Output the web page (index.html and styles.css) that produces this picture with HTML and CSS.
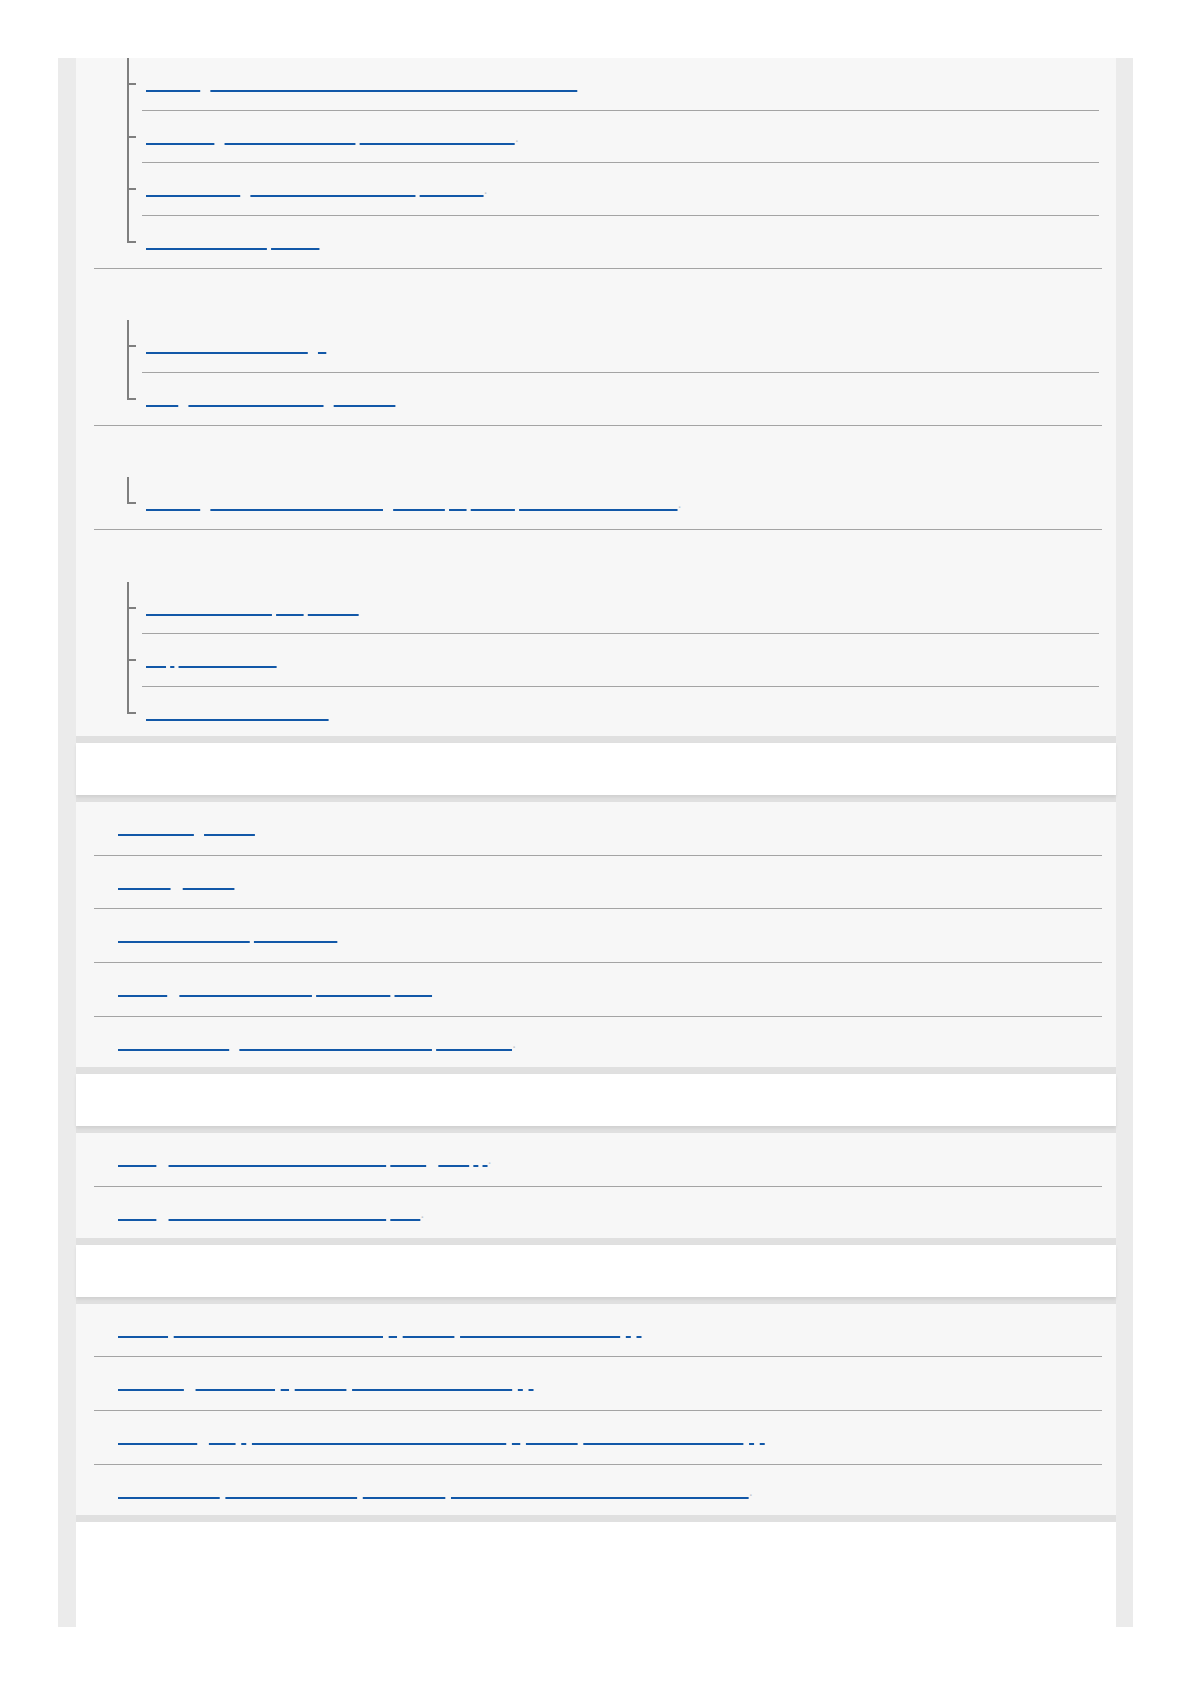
FILE: index.html
```html
<!DOCTYPE html>
<html lang="en">
<head>
    <meta charset="UTF-8">
    <meta name="viewport" content="width=device-width, initial-scale=1.0">
    <title>Help Guide - Contents</title>
    <link rel="stylesheet" href="styles.css">
</head>
<body>
<div class="page">
    <div class="sheet">

        <section class="panel">
            <ul class="topics">
                <li class="topic">
                    <ul class="tree">
                        <li><a href="#"><span>Settings</span> <span class="gap">for connecting to the smartphone via Bluetooth function</span></a></li>
                        <li><a href="#"><span>Recording</span> <span class="gap">the camera settings</span> <span>from the remote control</span><em class="stop">.</em></a></li>
                        <li><a href="#"><span>Synchronizing</span> <span class="gap">images to your computer</span> <span>wirelessly</span><em class="stop">.</em></a></li>
                        <li><a href="#"><span>Restoring network</span> <span>options</span></a></li>
                    </ul>
                </li>
                <li class="topic">
                    <h3 class="topic-title">Connecting to a smartphone</h3>
                    <ul class="tree">
                        <li><a href="#"><span>Connecting with Android</span> <span class="gap">1</span></a></li>
                        <li><a href="#"><span>View</span> <span class="gap">images on the tablet</span> <span class="gap">(Android)</span></a></li>
                    </ul>
                </li>
                <li class="topic">
                    <h3 class="topic-title">Connecting to a computer</h3>
                    <ul class="tree">
                        <li><a href="#"><span>Settings</span> <span class="gap">of the wireless connection</span> <span class="gap">settings</span> <span>for</span> <span>mobile</span> <span>devices and a computer</span><em class="stop">.</em></a></li>
                    </ul>
                </li>
                <li class="topic">
                    <h3 class="topic-title">Network settings</h3>
                    <ul class="tree">
                        <li><a href="#"><span>Connecting to your</span> <span>own</span> <span>devices</span></a></li>
                        <li><a href="#"><span>On</span> <span>/</span> <span>Off settings list</span></a></li>
                        <li class="short"><a href="#"><span>Notes on wireless functions</span></a></li>
                    </ul>
                </li>
            </ul>
        </section>

        <div class="bar"><h2 class="bar-title">Before use</h2></div>

        <section class="panel">
            <ul class="links">
                <li><a href="#"><span>Compatible</span> <span class="gap">devices</span></a></li>
                <li><a href="#"><span>Storage</span> <span class="gap-wide">settings</span></a></li>
                <li><a href="#"><span>Recordable number</span> <span>of video files</span></a></li>
                <li><a href="#"><span>Display</span> <span class="gap-wide">indications on every</span> <span>screen and</span> <span>finder</span></a></li>
                <li><a href="#"><span>Troubleshooting:</span> <span class="gap">if your camera does not work</span> <span>as it should</span><em class="stop">.</em></a></li>
            </ul>
        </section>

        <div class="bar"><h2 class="bar-title">Using the app</h2></div>

        <section class="panel">
            <ul class="links">
                <li><a href="#"><span>Using</span> <span class="gap-wide">the camera from the smartphone</span> <span>using</span> <span class="gap-wide">NFC</span> <span>(</span> <span>)</span><em class="stop">.</em></a></li>
                <li><a href="#"><span>Using</span> <span class="gap-wide">the camera from the smartphone</span> <span>iPad</span><em class="stop">.</em></a></li>
            </ul>
        </section>

        <div class="bar"><h2 class="bar-title">Information</h2></div>

        <section class="panel">
            <ul class="links spaced">
                <li><a href="#"><span>Notices</span> <span>regarding the included software</span> <span>a</span> <span>settings</span> <span>of open source software</span> <span>-</span> <span>)</span></a></li>
                <li><a href="#"><span>Operating</span> <span class="gap">Trademarks</span> <span>a</span> <span>settings</span> <span>of open source software</span> <span>-</span> <span>)</span></a></li>
                <li><a href="#"><span>Precautions</span> <span class="gap">with</span> <span>-</span> <span>the wireless connection between them</span> <span>a</span> <span>settings</span> <span>of open source software</span> <span>-</span> <span>)</span></a></li>
                <li><a href="#"><span>Recommended</span> <span>system requirement</span> <span>for Windows</span> <span>and Mac computers when using the software</span><em class="stop">.</em></a></li>
            </ul>
        </section>

        <div class="end"></div>
    </div>
</div>
</body>
</html>
```

FILE: styles.css
```css
body {
    margin: 0;
    background-color: #fff;
    font-family: "Liberation Sans", Arial, sans-serif;
    font-size: 15px;
}

.page {
    width: 1075px;
    margin: 58px 0 0 58px;
    padding: 0 17px 0 18px;
    box-sizing: border-box;
    background-color: #ebebeb;
}

.sheet {
    display: flex;
    flex-direction: column;
    gap: 7px;
    background-color: #e0e0e0;
}

.panel {
    background-color: #f7f7f7;
}

.bar {
    height: 52px;
    background-color: #fff;
    box-shadow: 0 2px 3px rgba(0, 0, 0, 0.08);
}

.bar-title {
    margin: 0;
    padding-left: 18px;
    font-size: 16px;
    font-weight: normal;
    line-height: 52px;
    color: transparent;
}

.end {
    height: 105px;
    background-color: #fff;
}

/* links: text is not drawn, only the underlines */
a {
    color: transparent;
    text-decoration: none;
    white-space: nowrap;
}

a span {
    text-decoration: underline;
    text-decoration-color: #1258a8;
    text-decoration-thickness: 1.5px;
    text-decoration-skip-ink: none;
}

a .stop {
    font-style: normal;
    color: #c4c9d0;
}

.gap {
    margin-left: 6px;
}

.gap-wide {
    margin-left: 8px;
}

/* grouped topics with a tree */
.topics {
    list-style: none;
    margin: 0 14px 0 18px;
    padding: 0;
}

.topic {
    border-bottom: 1px solid #a4a4a4;
}

.topic:last-child {
    border-bottom: 0;
}

.topic-title {
    margin: 0;
    height: 51.67px;
    padding-left: 24px;
    font-size: 15px;
    font-weight: normal;
    line-height: 51.67px;
    color: transparent;
}

.tree {
    list-style: none;
    margin: 0 3px 0 33px;
    padding: 0 0 0 15px;
}

.tree li {
    position: relative;
    height: 51.67px;
    line-height: 51.67px;
    padding-left: 4px;
    border-bottom: 1px solid #a4a4a4;
}

.tree li:last-child {
    border-bottom: 0;
}

.tree li.short {
    height: 49px;
}

.tree li::before {
    content: "";
    position: absolute;
    left: -15px;
    top: 0;
    bottom: -1px;
    width: 2px;
    background-color: #7f7f7f;
}

.tree li:last-child::before {
    bottom: auto;
    height: 27px;
}

.tree li::after {
    content: "";
    position: absolute;
    left: -13px;
    top: 25px;
    width: 7px;
    height: 2px;
    background-color: #7f7f7f;
}

/* plain link lists */
.links {
    list-style: none;
    margin: 0 14px 0 18px;
    padding: 0;
}

.links li {
    height: 52.7px;
    line-height: 52.7px;
    padding-left: 24px;
    border-bottom: 1px solid #a4a4a4;
}

.links li:last-child {
    border-bottom: 0;
    height: 50.7px;
}

.spaced a {
    word-spacing: 1.5px;
}

.spaced a span {
    word-spacing: normal;
}
```
